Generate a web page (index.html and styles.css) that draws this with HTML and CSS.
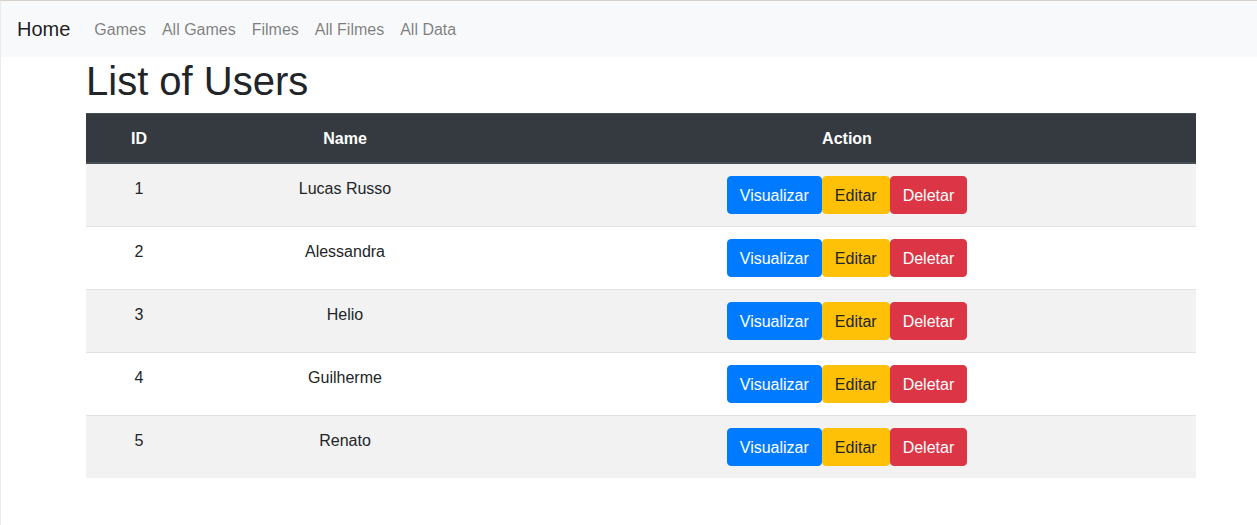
FILE: index.html
```html
<!DOCTYPE html>
<html lang="en">
<head>
<meta charset="utf-8">
<title>List of Users</title>
<link rel="stylesheet" href="styles.css">
</head>
<body>
<div class="frame">
  <nav class="navbar">
    <a class="brand" href="#">Home</a>
    <ul class="nav">
      <li><a class="nav-link" href="#">Games</a></li>
      <li><a class="nav-link" href="#">All Games</a></li>
      <li><a class="nav-link" href="#">Filmes</a></li>
      <li><a class="nav-link" href="#">All Filmes</a></li>
      <li><a class="nav-link" href="#">All Data</a></li>
    </ul>
  </nav>
  <main class="container">
    <h1 class="title">List of Users</h1>
    <table class="table">
      <thead>
        <tr><th class="col-id">ID</th><th class="col-name">Name</th><th class="col-action">Action</th></tr>
      </thead>
      <tbody>
        <tr><td>1</td><td>Lucas Russo</td><td><div class="actions"><a class="btn btn-primary" href="#">Visualizar</a><a class="btn btn-warning" href="#">Editar</a><a class="btn btn-danger" href="#">Deletar</a></div></td></tr>
        <tr><td>2</td><td>Alessandra</td><td><div class="actions"><a class="btn btn-primary" href="#">Visualizar</a><a class="btn btn-warning" href="#">Editar</a><a class="btn btn-danger" href="#">Deletar</a></div></td></tr>
        <tr><td>3</td><td>Helio</td><td><div class="actions"><a class="btn btn-primary" href="#">Visualizar</a><a class="btn btn-warning" href="#">Editar</a><a class="btn btn-danger" href="#">Deletar</a></div></td></tr>
        <tr><td>4</td><td>Guilherme</td><td><div class="actions"><a class="btn btn-primary" href="#">Visualizar</a><a class="btn btn-warning" href="#">Editar</a><a class="btn btn-danger" href="#">Deletar</a></div></td></tr>
        <tr><td>5</td><td>Renato</td><td><div class="actions"><a class="btn btn-primary" href="#">Visualizar</a><a class="btn btn-warning" href="#">Editar</a><a class="btn btn-danger" href="#">Deletar</a></div></td></tr>
      </tbody>
    </table>
  </main>
</div>
</body>
</html>
```
FILE: styles.css
```css
* { box-sizing: border-box; }
html, body { margin: 0; padding: 0; }
body {
  font-family: "Liberation Sans", Arial, sans-serif;
  font-size: 16px;
  line-height: 1.5;
  color: #212529;
  background: #fff;
}
.frame {
  min-height: 525px;
  border-top: 1px solid #d4cfca;
  border-left: 1px solid #ebebeb;
}
.navbar {
  display: flex;
  align-items: center;
  padding: 8px 16px;
  background: #f8f9fa;
}
.brand {
  font-size: 20px;
  line-height: 30px;
  padding: 5px 0;
  margin-right: 16px;
  color: rgba(0,0,0,.9);
  text-decoration: none;
}
.nav {
  display: flex;
  list-style: none;
  margin: 0;
  padding: 0;
}
.nav-link {
  display: block;
  padding: 9px 8px 7px;
  color: rgba(0,0,0,.5);
  text-decoration: none;
}
.container {
  width: 1110px;
  margin-left: 85px;
}
.title {
  font-size: 40px;
  font-weight: 500;
  line-height: 1.2;
  margin: 0 0 8px;
}
.table {
  width: 100%;
  border-collapse: collapse;
}
.table th, .table td {
  padding: 13px 12px 11px;
  text-align: center;
  vertical-align: top;
  border-top: 1px solid #dee2e6;
}
.table td:last-child { padding-top: 12px; padding-bottom: 12px; }
.table thead th {
  background: #343a40;
  color: #fff;
  font-weight: 700;
  border-top-color: #454d55;
  border-bottom: 2px solid #454d55;
}
.col-id { width: 106px; }
.col-name { width: 306px; }
.table tbody tr:nth-child(odd) { background: #f2f2f2; }
.actions {
  display: flex;
  justify-content: center;
}
.btn {
  display: inline-block;
  padding: 7px 12px 5px;
  font-size: 16px;
  line-height: 24px;
  border: 1px solid transparent;
  border-radius: 4px;
  text-decoration: none;
}
.btn-primary { background: #007bff; border-color: #007bff; color: #fff; }
.btn-warning { background: #ffc107; border-color: #ffc107; color: #212529; }
.btn-danger { background: #dc3545; border-color: #dc3545; color: #fff; }
```
